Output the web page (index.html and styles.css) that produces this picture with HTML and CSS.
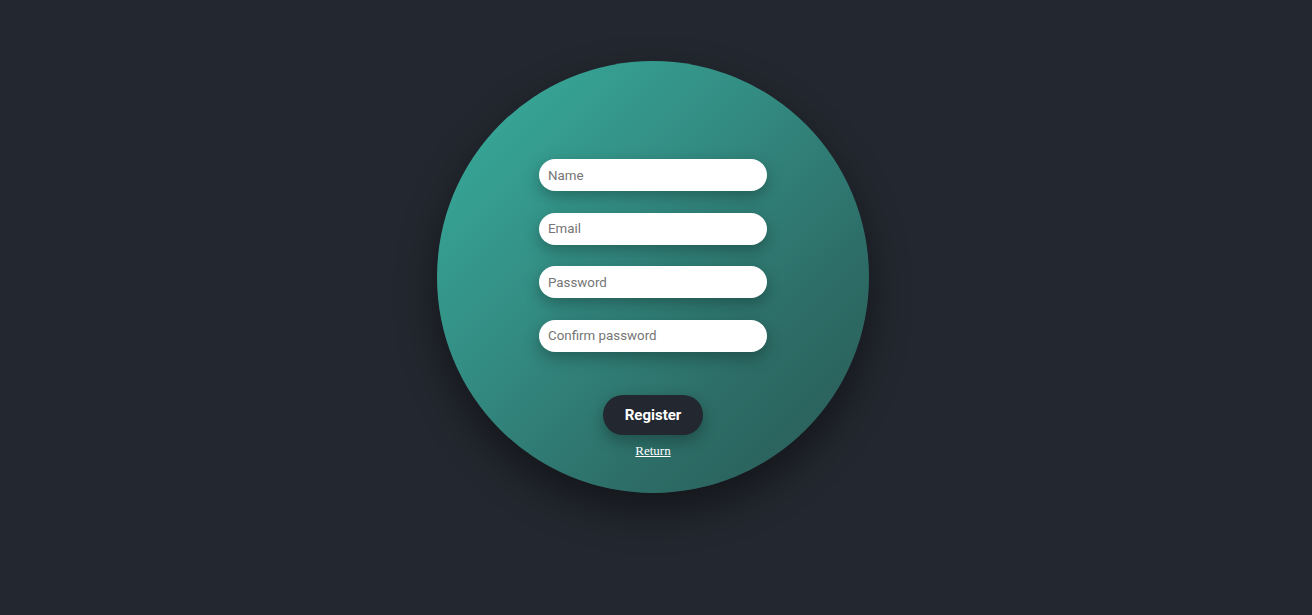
FILE: index.html
```html
<!DOCTYPE html>
<html>
<head>
<meta charset="utf-8">
<link rel="stylesheet" href="styles.css">
</head>
<body>
<main class="page">
  <form class="circle">
    <div class="fields">
      <input class="field" type="text" placeholder="Name">
      <input class="field" type="email" placeholder="Email">
      <input class="field" type="password" placeholder="Password">
      <input class="field" type="password" placeholder="Confirm password">
    </div>
    <button class="register" type="button">Register</button>
    <a class="return" href="#">Return</a>
  </form>
</main>
</body>
</html>
```
FILE: styles.css
```css
html, body {
  margin: 0;
  height: 100%;
  background: #23272f;
}
.page {
  height: 615px;
  display: flex;
  justify-content: center;
  align-items: flex-start;
  padding-top: 61px;
  padding-right: 6px;
  box-sizing: border-box;
}
.circle {
  width: 432px;
  height: 432px;
  border-radius: 50%;
  background: linear-gradient(135deg, #38b09f 0%, #338c82 40%, #2d6e68 70%, #2a5955 100%);
  box-shadow: 0 18px 40px rgba(0, 0, 0, 0.45);
  display: flex;
  flex-direction: column;
  align-items: center;
  padding-top: 98px;
  box-sizing: border-box;
}
.fields {
  display: flex;
  flex-direction: column;
  gap: 21.5px;
}
.field {
  width: 228px;
  height: 32px;
  box-sizing: border-box;
  border: none;
  border-radius: 16px;
  background: #ffffff;
  padding: 0 9px;
  font-family: Roboto, "Liberation Sans", sans-serif;
  font-size: 13.33px;
  color: #333;
  outline: none;
  box-shadow: 0 6px 16px rgba(0, 0, 0, 0.28);
}
.field::placeholder {
  color: #757575;
}
.register {
  margin-top: 43px;
  width: 100px;
  height: 40px;
  border: none;
  border-radius: 20px;
  background: #23272f;
  color: #ffffff;
  font-family: Roboto, "Liberation Sans", sans-serif;
  font-weight: 700;
  font-size: 15px;
  box-shadow: 0 6px 16px rgba(0, 0, 0, 0.3);
  cursor: pointer;
}
.return {
  margin-top: 8px;
  font-family: "Liberation Serif", "Times New Roman", serif;
  font-size: 13px;
  color: #ffffff;
  text-decoration: underline;
}
```
